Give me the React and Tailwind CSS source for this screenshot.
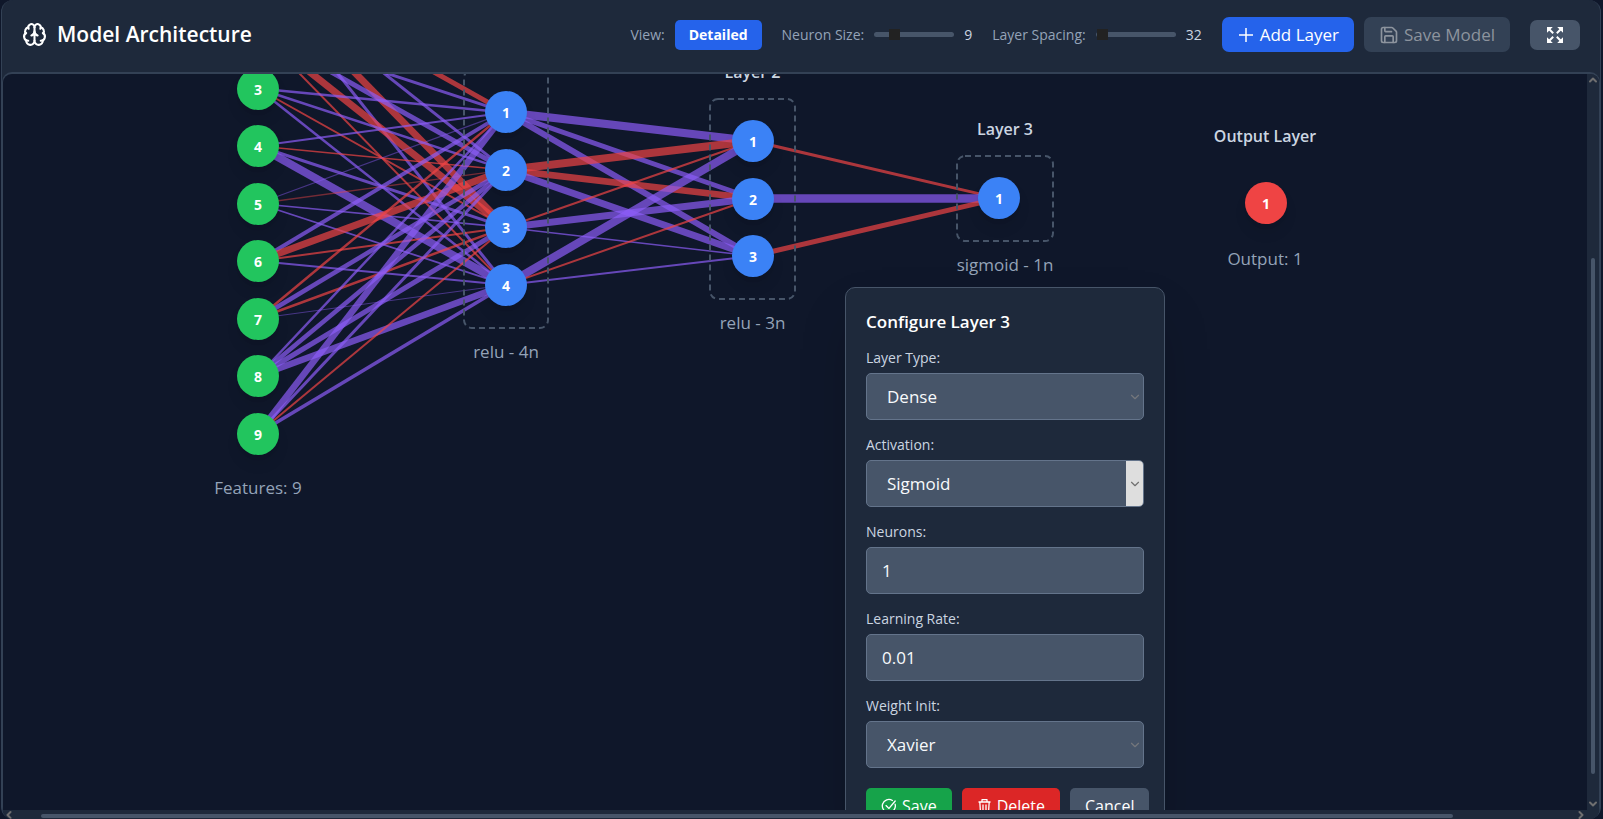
import { Brain, Save, ChevronDown, ChevronUp, ChevronLeft, ChevronRight } from "lucide-react";

const PURPLE = "#8b5cf6";
const RED = "#ef4444";
const PITCH = 57.5;

const layers = [
  { id: "input", x: 255, first: -100.5, count: 9, fill: "bg-[#22c55e]" },
  { id: "l1", x: 503, first: 38.4, count: 4, fill: "bg-[#3b82f6]" },
  { id: "l2", x: 750, first: 67, count: 3, fill: "bg-[#3b82f6]" },
  { id: "l3", x: 996, first: 124.4, count: 1, fill: "bg-[#3b82f6]" },
  { id: "output", x: 1263, first: 129.4, count: 1, fill: "bg-[#ef4444]" },
];

// One row per source neuron, one entry per target: positive weights are purple, negative red.
const weights = [
  [
    [-5, 3, -7, 3],
    [3, 5, -7, -2],
    [2.5, 2.5, -2, 2.5],
    [2, -1.5, 3, 8],
    [1.2, -1.3, 1.6, 1.8],
    [4, -7, -2, 2],
    [-2.5, 4.5, -2.5, 1],
    [2.5, 4.5, 5, 6.5],
    [6.5, 3, -2, 3.5],
  ],
  [
    [8, 5, 6],
    [-8, -6.5, 7],
    [-2.2, 7, 1.5],
    [8, -2, 2],
  ],
  [[-3], [8.5], [-5]],
];

const frames = [
  { id: "l1", x: 460, y: -5, w: 86, h: 260, caption: "relu - 4n" },
  { id: "l2", x: 706, y: 24, w: 87, h: 202, title: "Layer 2", caption: "relu - 3n" },
  { id: "l3", x: 953, y: 81, w: 98, h: 87, title: "Layer 3", caption: "sigmoid - 1n" },
];

const nodeY = (layer, i) => layer.first + i * PITCH;

function PlusIcon() {
  return (
    <svg width="18" height="18" viewBox="0 0 18 18" fill="none" stroke="currentColor" strokeWidth="1.5" aria-hidden="true">
      <path d="M9 2v14M2 9h14" />
    </svg>
  );
}

function CheckCircleIcon() {
  return (
    <svg width="16" height="16" viewBox="0 0 16 16" fill="none" stroke="currentColor" strokeWidth="1.3" strokeLinecap="round" strokeLinejoin="round" aria-hidden="true">
      <path d="M14.1 6.2A6.5 6.5 0 1 1 11.4 2.5" />
      <path d="M5 7.6 8 10.4 14.2 3" />
    </svg>
  );
}

function TrashIcon() {
  return (
    <svg width="15" height="16" viewBox="0 0 15 16" fill="none" stroke="currentColor" strokeWidth="1.3" strokeLinejoin="round" aria-hidden="true">
      <path d="M1.5 4h12M5 4V1.7h5V4M2.8 4l.7 10.4h8L12.2 4M6 6.5v5.5M9 6.5v5.5" />
    </svg>
  );
}

function ExpandIcon() {
  return (
    <svg width="16" height="16" viewBox="0 0 16 16" fill="currentColor" stroke="currentColor" aria-hidden="true">
      <path
        stroke="none"
        d="M0 0h5.8L4 1.8v0L1.8 4 0 5.8zM16 0v5.8L14.2 4 12 1.8 10.2 0zM0 16v-5.8L1.8 12 4 14.2 5.8 16zM16 16h-5.8l1.8-1.8L14.2 12l1.8-1.8z"
      />
      <path fill="none" strokeWidth="2" d="M2 2l4.2 4.2M14 2 9.8 6.2M2 14l4.2-4.2M14 14 9.8 9.8" />
    </svg>
  );
}

function Links() {
  return (
    <svg className="absolute inset-0 h-full w-full" aria-hidden="true">
      {weights.flatMap((rows, l) =>
        rows.flatMap((row, i) =>
          row.map((w, j) => (
            <line
              key={`${l}-${i}-${j}`}
              x1={layers[l].x}
              y1={nodeY(layers[l], i)}
              x2={layers[l + 1].x}
              y2={nodeY(layers[l + 1], j)}
              stroke={w > 0 ? PURPLE : RED}
              strokeWidth={Math.abs(w)}
              strokeOpacity={Math.abs(w) < 1.4 ? 0.45 : 0.7}
            />
          ))
        )
      )}
    </svg>
  );
}

function Node({ x, y, fill, children }) {
  return (
    <div
      className={`absolute flex size-[42px] items-center justify-center rounded-full text-[14px] font-bold text-white shadow-lg ${fill}`}
      style={{ left: x - 21, top: Math.round(y - 21) }}
    >
      {children}
    </div>
  );
}

function Caption({ x, y, strong, children }) {
  return (
    <div
      className={`absolute -translate-x-1/2 -translate-y-1/2 whitespace-nowrap leading-6 ${strong ? "text-[16px] font-semibold text-[#cbd5e1]" : "text-[17px] text-[#94a3b8]"}`}
      style={{ left: x, top: y }}
    >
      {children}
    </div>
  );
}

function Slider({ id, label, min, max, value }) {
  return (
    <div className="flex items-center gap-[10px]">
      <label htmlFor={id} className="text-[#94a3b8]">{label}</label>
      <input
        id={id}
        type="range"
        min={min}
        max={max}
        defaultValue={value}
        className="h-[5px] w-20 appearance-none rounded-full bg-[#475569] [&::-webkit-slider-thumb]:size-[11px] [&::-webkit-slider-thumb]:appearance-none [&::-webkit-slider-thumb]:bg-[#222222]"
      />
      <span className="text-[#cbd5e1]">{value}</span>
    </div>
  );
}

const fieldBox = "h-[47px] w-full rounded-[5px] border border-[#64748b] bg-[#475569] text-[17px] text-[#f8fafc] outline-none";

function SelectField({ id, label, value, active }) {
  return (
    <div className="flex flex-col gap-[5px]">
      <label htmlFor={id} className="text-[14px] leading-5 text-[#cbd5e1]">{label}</label>
      <div className="relative">
        <select id={id} defaultValue={value} className={`${fieldBox} block appearance-none px-5`}>
          <option>{value}</option>
        </select>
        <span
          className={`pointer-events-none absolute inset-y-px right-px flex w-[17px] items-center justify-center rounded-r-[4px] ${active ? "bg-[#dedede] text-[#707070]" : "text-[#75777c]"}`}
        >
          <ChevronDown size={14} strokeWidth={2} />
        </span>
      </div>
    </div>
  );
}

function InputField({ id, label, value }) {
  return (
    <div className="flex flex-col gap-[5px]">
      <label htmlFor={id} className="text-[14px] leading-5 text-[#cbd5e1]">{label}</label>
      <input id={id} type="text" defaultValue={value} className={`${fieldBox} px-[15px]`} />
    </div>
  );
}

function ConfigPanel() {
  return (
    <form className="absolute left-[842px] top-[213px] w-80 rounded-[10px] border border-[#475569] bg-[#1e293b] p-5 shadow-2xl">
      <h3 className="mb-3 text-[17px] font-semibold leading-7 text-white">Configure Layer 3</h3>
      <div className="flex flex-col gap-[15px]">
        <SelectField id="type" label="Layer Type:" value="Dense" />
        <SelectField id="activation" label="Activation:" value="Sigmoid" active />
        <InputField id="neurons" label="Neurons:" value="1" />
        <InputField id="rate" label="Learning Rate:" value="0.01" />
        <SelectField id="init" label="Weight Init:" value="Xavier" />
      </div>
      <div className="mt-5 flex gap-[10px] whitespace-nowrap text-[16px] leading-6 text-white">
        <button type="button" className="flex h-9 shrink-0 items-center gap-[5px] rounded-[5px] bg-[#16a34a] px-[15px]">
          <CheckCircleIcon />
          Save
        </button>
        <button type="button" className="flex h-9 shrink-0 items-center gap-[5px] rounded-[5px] bg-[#dc2626] px-[15px]">
          <TrashIcon />
          Delete
        </button>
        <button type="button" className="h-9 shrink-0 rounded-[5px] bg-[#475569] px-[15px]">Cancel</button>
      </div>
    </form>
  );
}

export default function App() {
  return (
    <div className="h-screen overflow-hidden bg-[#0f172a] pl-px pr-[2px] font-['Open_Sans','Noto_Sans',sans-serif]">
      <main className="flex h-full flex-col overflow-hidden rounded-xl border-x border-[#334155] bg-[#1e293b]">
        <header className="flex h-[72px] shrink-0 items-center justify-between whitespace-nowrap px-5 pb-[3px]">
          <h1 className="flex items-center gap-[10px] text-[21px] font-semibold text-white">
            <Brain size={25} strokeWidth={2} />
            Model Architecture
          </h1>
          <div className="flex items-center gap-5 text-[14px]">
            <div className="flex items-center gap-[10px]">
              <span className="text-[#94a3b8]">View:</span>
              <button type="button" className="h-[30px] rounded-[5px] bg-[#2563eb] px-[14px] font-bold text-white">Detailed</button>
            </div>
            <Slider id="neuron-size" label="Neuron Size:" min={6} max={20} value={9} />
            <Slider id="layer-spacing" label="Layer Spacing:" min={30} max={130} value={32} />
            <div className="flex items-center gap-[10px] text-[17px]">
              <button type="button" className="flex h-[35px] items-center gap-[5px] rounded-[7px] bg-[#2563eb] px-[15px] text-white">
                <PlusIcon />
                Add Layer
              </button>
              <button type="button" disabled className="flex h-[35px] items-center gap-[5px] rounded-[7px] bg-[#334155] px-[15px] text-[#8d949e]">
                <Save size={20} strokeWidth={2} />
                Save Model
              </button>
            </div>
            <button type="button" aria-label="Expand" className="flex h-[30px] w-[50px] items-center justify-center rounded-[7px] bg-[#475569] text-white">
              <ExpandIcon />
            </button>
          </div>
        </header>

        <section className="flex min-h-0 flex-1 flex-col overflow-hidden rounded-t-[10px] border-x border-t-2 border-[#334155]">
          <div className="flex min-h-0 flex-1">
            <div className="relative min-w-0 flex-1 overflow-hidden rounded-tl-[9px] bg-[#0f172a]">
              <Links />
              {frames.map((f) => (
                <div
                  key={f.id}
                  className="absolute"
                  style={{ left: f.x, top: f.y, width: f.w, height: f.h }}
                >
                  <svg className="h-full w-full" aria-hidden="true">
                    <rect x="1" y="1" width={f.w - 2} height={f.h - 2} rx="8" fill="none" stroke="#475569" strokeWidth="2" strokeDasharray="6 4" />
                  </svg>
                </div>
              ))}
              {frames.map((f) => (
                <div key={f.id}>
                  {f.title && <Caption x={f.x + f.w / 2} y={f.y - 26} strong>{f.title}</Caption>}
                  <Caption x={f.x + f.w / 2} y={f.y + f.h + 23}>{f.caption}</Caption>
                </div>
              ))}
              {layers.flatMap((layer) =>
                Array.from({ length: layer.count }, (_, i) => i)
                  .filter((i) => nodeY(layer, i) > -21)
                  .map((i) => (
                    <Node key={`${layer.id}-${i}`} x={layer.x} y={nodeY(layer, i)} fill={layer.fill}>
                      {i + 1}
                    </Node>
                  ))
              )}
              <Caption x={255} y={414}>Features: 9</Caption>
              <Caption x={1262} y={62} strong>Output Layer</Caption>
              <Caption x={1262} y={185}>Output: 1</Caption>
              <ConfigPanel />
            </div>
            <div className="flex w-3 shrink-0 flex-col items-center justify-between bg-[#1e293b] text-[#6f6f70]" aria-hidden="true">
              <ChevronUp size={12} strokeWidth={4} />
              <div className="flex w-1 flex-1 flex-col">
                <div className="flex-[172]" />
                <div className="flex-[516] rounded-full bg-[#475569]" />
                <div className="flex-[24]" />
              </div>
              <ChevronDown size={12} strokeWidth={4} />
            </div>
          </div>
          <div className="flex h-[9px] shrink-0 items-center bg-[#1e293b] pr-3 text-[#6f6f70]" aria-hidden="true">
            <ChevronLeft size={12} strokeWidth={4} />
            <div className="flex h-1 flex-1 translate-y-px">
              <div className="flex-[26]" />
              <div className="flex-[1412] rounded-full bg-[#475569]" />
              <div className="flex-[122]" />
            </div>
            <ChevronRight size={12} strokeWidth={4} />
          </div>
        </section>
      </main>
    </div>
  );
}
